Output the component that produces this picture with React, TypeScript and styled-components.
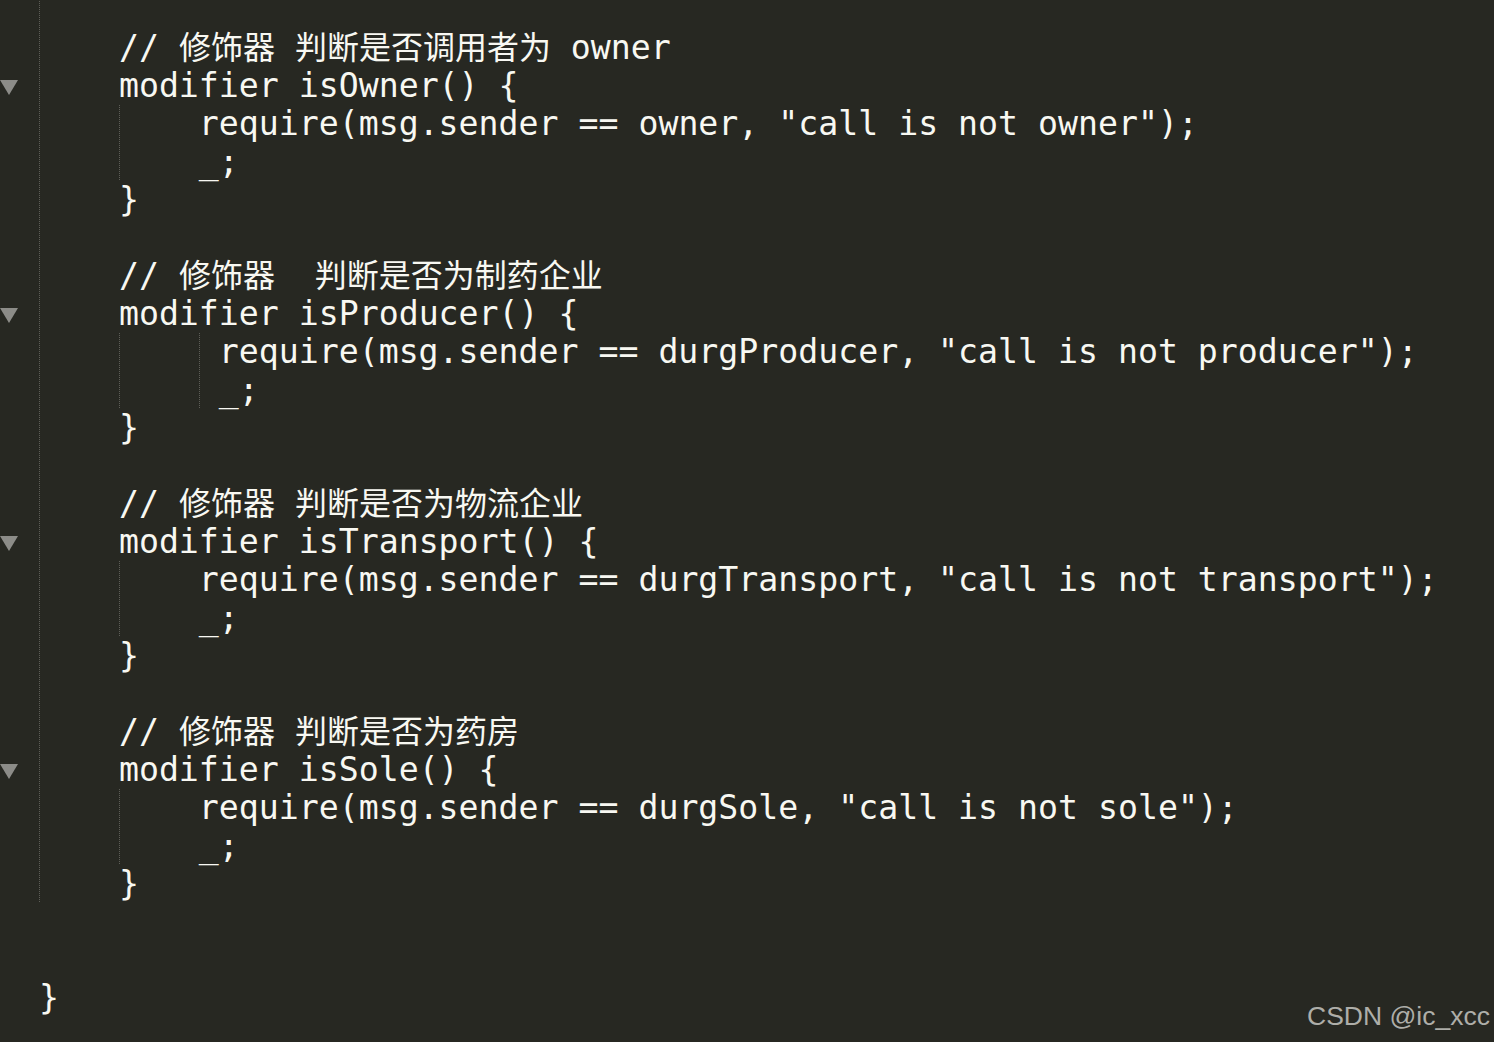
import React from "react";
import styled, { createGlobalStyle } from "styled-components";

const GlobalStyle = createGlobalStyle`
  html, body {
    margin: 0;
    padding: 0;
    background: #272822;
    overflow: hidden;
  }
  #root {
    min-height: 100vh;
  }
`;

const Screen = styled.div`
  position: relative;
  width: 1494px;
  height: 1042px;
  background: #272822;
  overflow: hidden;
`;

const Editor = styled.div`
  display: flex;
  flex-direction: column;
  margin-top: -9px;
`;

const Row = styled.div`
  display: flex;
  align-items: stretch;
  height: 38px;
`;

const Gutter = styled.div`
  width: 39px;
  flex: none;
  display: flex;
  align-items: center;
  padding-top: 3px;
  box-sizing: border-box;
`;

const Code = styled.div`
  display: flex;
  align-items: stretch;
  font-family: "DejaVu Sans Mono", "Noto Sans CJK SC", monospace;
  font-size: 33.2px;
  line-height: 38px;
  color: #f8f8f2;
  white-space: pre;
`;

const Guide = styled.span<{ $cols: number }>`
  display: inline-block;
  width: ${(p) => p.$cols}ch;
  height: 38px;
  flex: none;
  background-image: repeating-linear-gradient(
    to bottom,
    #5e5e58 0px,
    #5e5e58 1px,
    transparent 1px,
    transparent 2px
  );
  background-size: 1px 100%;
  background-repeat: no-repeat;
  background-position: 0 0;
`;

const Text = styled.span`
  display: inline-block;
  height: 38px;
`;

const Cjk = styled.span`
  display: inline-block;
  font-family: "Noto Sans CJK SC", sans-serif;
  font-size: 32px;
  line-height: 33px;
`;

const Watermark = styled.div`
  position: absolute;
  right: 4px;
  bottom: 13px;
  font-family: "Liberation Sans", Arial, sans-serif;
  font-size: 26.5px;
  line-height: 1;
  color: #bdbdb8;
  opacity: 0.9;
`;

const FoldMark = () => (
  <svg width="18" height="15" viewBox="0 0 18 15">
    <polygon points="0,0 18,0 9,15" fill="#8c8c88" />
  </svg>
);

type Line = { guides: number[]; text: string; fold?: boolean };

const block = (comment: string, name: string, req: string, producer = false): Line[] => {
  const inner = producer ? [4, 4, 1] : [4, 4];
  return [
    { guides: [4], text: comment },
    { guides: [4], text: `modifier ${name}() {`, fold: true },
    { guides: inner, text: req },
    { guides: inner, text: "_;" },
    { guides: [4], text: "}" },
  ];
};

const lines: Line[] = [
  { guides: [4], text: "" },
  ...block(
    "// 修饰器 判断是否调用者为 owner",
    "isOwner",
    'require(msg.sender == owner, "call is not owner");'
  ),
  { guides: [4], text: "" },
  ...block(
    "// 修饰器  判断是否为制药企业",
    "isProducer",
    'require(msg.sender == durgProducer, "call is not producer");',
    true
  ),
  { guides: [4], text: "" },
  ...block(
    "// 修饰器 判断是否为物流企业",
    "isTransport",
    'require(msg.sender == durgTransport, "call is not transport");'
  ),
  { guides: [4], text: "" },
  ...block(
    "// 修饰器 判断是否为药房",
    "isSole",
    'require(msg.sender == durgSole, "call is not sole");'
  ),
  { guides: [], text: "" },
  { guides: [], text: "" },
  { guides: [], text: "}" },
];

const renderText = (text: string) =>
  text.split(/([\u4e00-\u9fff]+)/).map((part, i) =>
    /[\u4e00-\u9fff]/.test(part) ? <Cjk key={i}>{part}</Cjk> : part
  );

export default function App() {
  return (
    <>
      <GlobalStyle />
      <Screen>
        <Editor>
          {lines.map((line, i) => (
            <Row key={i}>
              <Gutter>{line.fold ? <FoldMark /> : null}</Gutter>
              <Code>
                {line.guides.map((cols, g) => (
                  <Guide key={g} $cols={cols} />
                ))}
                <Text>{renderText(line.text)}</Text>
              </Code>
            </Row>
          ))}
        </Editor>
        <Watermark>CSDN @ic_xcc</Watermark>
      </Screen>
    </>
  );
}
